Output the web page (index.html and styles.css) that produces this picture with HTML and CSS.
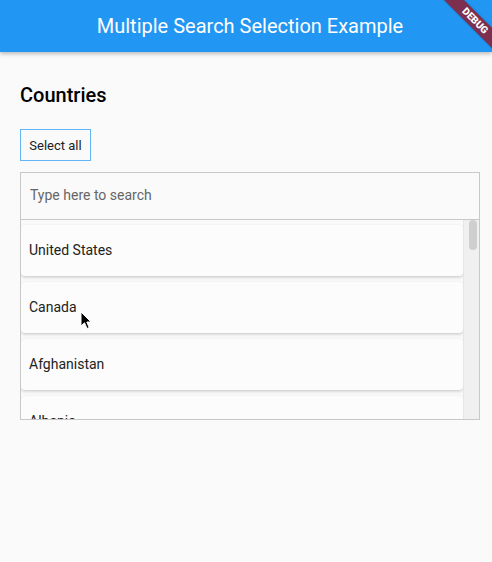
FILE: index.html
```html
<!DOCTYPE html>
<html lang="en">
<head>
<meta charset="utf-8">
<title>Multiple Search Selection Example</title>
<link rel="stylesheet" href="styles.css">
</head>
<body>
<header class="appbar">
  <h1 class="appbar-title">Multiple Search Selection Example</h1>
</header>
<div class="debug-banner">DEBUG</div>
<main class="content">
  <h2 class="heading">Countries</h2>
  <button class="select-all" type="button">Select all</button>
  <section class="picker">
    <div class="search">
      <input class="search-input" type="text" placeholder="Type here to search">
    </div>
    <div class="list-wrap">
      <ul class="list">
        <li class="card">United States</li>
        <li class="card">Canada</li>
        <li class="card">Afghanistan</li>
        <li class="card">Albania</li>
      </ul>
      <div class="scroll-track"><div class="scroll-thumb"></div></div>
    </div>
  </section>
</main>
<svg class="cursor" width="13" height="19" viewBox="0 0 13 19" aria-hidden="true">
  <path d="M1 1 L1 15 L4.5 11.8 L7 17.5 L9.2 16.6 L6.8 11 L11 11 Z" fill="#000" stroke="#fff" stroke-width="1" stroke-linejoin="round"/>
</svg>
</body>
</html>
```

FILE: styles.css
```css
html, body {
  margin: 0;
  padding: 0;
}
body {
  width: 492px;
  height: 562px;
  overflow: hidden;
  position: relative;
  background: #fafafa;
  font-family: Roboto, "Noto Sans", sans-serif;
  color: #212121;
}
.appbar {
  height: 52px;
  padding-left: 8px;
  background: #2196f3;
  box-shadow: 0 2px 4px rgba(0, 0, 0, 0.25);
  display: flex;
  align-items: center;
  justify-content: center;
  position: relative;
  z-index: 1;
}
.appbar-title {
  margin: 0;
  font-size: 20px;
  font-weight: 400;
  color: #fff;
  line-height: 24px;
}
.debug-banner {
  position: absolute;
  left: 425px;
  top: 14px;
  width: 100px;
  height: 14px;
  line-height: 14px;
  background: #7c2f4f;
  color: #fff;
  font-family: Roboto, sans-serif;
  font-size: 10px;
  font-weight: 900;
  text-align: center;
  transform: rotate(45deg);
  z-index: 2;
  box-shadow: 0 0 2px rgba(0, 0, 0, 0.3);
}
.content {
  padding: 31px 12px 0 20px;
  display: flex;
  flex-direction: column;
  align-items: flex-start;
}
.heading {
  margin: 0;
  font-size: 20px;
  font-weight: 500;
  line-height: 24px;
  color: #000;
}
.select-all {
  margin-top: 22px;
  height: 32px;
  width: 71px;
  padding: 0;
  background: transparent;
  border: 1px solid #64b5f6;
  border-radius: 0;
  font-family: Roboto, sans-serif;
  font-size: 13px;
  color: #212121;
}
.picker {
  margin-top: 11px;
  width: 460px;
  height: 248px;
  box-sizing: border-box;
  border: 1px solid #c8c8c8;
  display: flex;
  flex-direction: column;
}
.search {
  height: 47px;
  flex: none;
  box-sizing: border-box;
  padding-bottom: 3px;
  border-bottom: 1px solid #c8c8c8;
  display: flex;
  align-items: center;
}
.search-input {
  border: none;
  outline: none;
  background: transparent;
  width: 100%;
  padding: 0 0 0 9px;
  font-family: Roboto, sans-serif;
  font-size: 14px;
  color: #212121;
}
.search-input::placeholder {
  color: #666;
}
.list-wrap {
  flex: 1;
  display: flex;
  overflow: hidden;
}
.list {
  list-style: none;
  margin: 0;
  padding: 5px 0 0 0;
  flex: 1;
  display: flex;
  flex-direction: column;
  gap: 6px;
  overflow: hidden;
}
.card {
  flex: none;
  height: 51px;
  box-sizing: border-box;
  padding-bottom: 2px;
  display: flex;
  align-items: center;
  padding-left: 8px;
  background: #fcfcfc;
  border-radius: 4px;
  box-shadow: 0 1px 3px rgba(0, 0, 0, 0.16), 0 2px 4px rgba(0, 0, 0, 0.06);
  font-size: 14px;
  color: #212121;
}
.scroll-track {
  width: 16px;
  flex: none;
  background: #f0f0f0;
  border-left: 1px solid #e6e6e6;
  box-sizing: border-box;
  padding: 0 2px 0 5px;
}
.scroll-thumb {
  width: 8px;
  height: 30px;
  border-radius: 4px;
  background: #cfcfcf;
}
.cursor {
  position: absolute;
  left: 80px;
  top: 311px;
  z-index: 3;
}
```
